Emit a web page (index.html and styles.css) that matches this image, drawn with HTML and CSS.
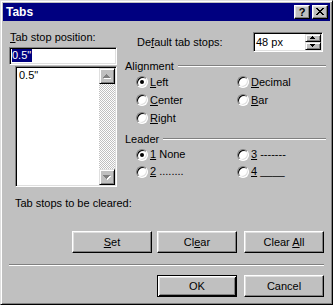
FILE: index.html
```html
<!DOCTYPE html>
<html>
<head>
<meta charset="utf-8">
<title>Tabs</title>
<link rel="stylesheet" href="styles.css">
</head>
<body>
<div class="window">
  <div class="titlebar">
    <span class="title">Tabs</span>
    <div class="caption-btns">
      <span class="cap-btn help">?</span>
      <span class="cap-btn close"><svg width="14" height="12" viewBox="0 0 14 12"><path fill="#000" d="M3 2h2v1h-2z M9 2h2v1h-2z M4 3h2v1h-2z M8 3h2v1h-2z M5 4h4v1h-4z M6 5h2v1h-2z M5 6h4v1h-4z M4 7h2v1h-2z M8 7h2v1h-2z M3 8h2v1h-2z M9 8h2v1h-2z"/></svg></span>
    </div>
  </div>
  <div class="content">
    <div class="top">
      <div class="col-left">
        <div class="pos-label"><u>T</u>ab stop position:</div>
        <div class="edit pos-edit"><span class="sel">0.5"</span></div>
        <div class="listbox">
          <div class="list-items"><div class="item">0.5"</div></div>
          <div class="vscroll">
            <div class="sb-btn"><svg width="14" height="14" viewBox="0 0 14 14"><path fill="#fff" d="M7 6h1v1h-1z M6 7h3v1h-3z M5 8h5v1h-5z M4 9h7v1h-7z"/><path fill="#808080" d="M6 5h1v1h-1z M5 6h3v1h-3z M4 7h5v1h-5z M3 8h7v1h-7z"/></svg></div>
            <div class="sb-track"></div>
            <div class="sb-btn"><svg width="14" height="14" viewBox="0 0 14 14"><path fill="#fff" d="M4 6h7v1h-7z M5 7h5v1h-5z M6 8h3v1h-3z M7 9h1v1h-1z"/><path fill="#808080" d="M3 5h7v1h-7z M4 6h5v1h-5z M5 7h3v1h-3z M6 8h1v1h-1z"/></svg></div>
          </div>
        </div>
      </div>
      <div class="col-right">
        <div class="default-row">
          <div class="default-label">De<u>f</u>ault tab stops:</div>
          <div class="edit spin">
            <span class="spin-val">48 px</span>
            <div class="spin-btns">
              <div class="spin-btn"><svg width="14" height="6" viewBox="0 0 14 6"><path fill="#000" d="M6 1h1v1h-1z M5 2h3v1h-3z M4 3h5v1h-5z"/></svg></div>
              <div class="spin-btn"><svg width="14" height="6" viewBox="0 0 14 6"><path fill="#000" d="M4 1h5v1h-5z M5 2h3v1h-3z M6 3h1v1h-1z"/></svg></div>
            </div>
          </div>
        </div>

        <div class="group-head"><span>Alignment</span><span class="etch"></span></div>
        <div class="radios align-radios">
          <div class="radio"><span class="rb checked"></span><span><u>L</u>eft</span></div>
          <div class="radio"><span class="rb"></span><span><u>D</u>ecimal</span></div>
          <div class="radio"><span class="rb"></span><span><u>C</u>enter</span></div>
          <div class="radio"><span class="rb"></span><span><u>B</u>ar</span></div>
          <div class="radio"><span class="rb"></span><span><u>R</u>ight</span></div>
        </div>

        <div class="group-head leader-head"><span>Leader</span><span class="etch"></span></div>
        <div class="radios leader-radios">
          <div class="radio"><span class="rb checked"></span><span><u>1</u> None</span></div>
          <div class="radio"><span class="rb"></span><span><u>3</u> -------</span></div>
          <div class="radio"><span class="rb"></span><span><u>2</u> ........</span></div>
          <div class="radio"><span class="rb"></span><span><u>4</u> ____</span></div>
        </div>
      </div>
    </div>

    <div class="cleared">Tab stops to be cleared:</div>

    <div class="btn-row">
      <button class="btn"><u>S</u>et</button>
      <button class="btn gap5">Cl<u>e</u>ar</button>
      <button class="btn gap7">Clear <u>A</u>ll</button>
    </div>

    <div class="separator"></div>

    <div class="btn-row ok-row">
      <button class="btn default">OK</button>
      <button class="btn gap7">Cancel</button>
    </div>
  </div>
</div>
</body>
</html>
```

FILE: styles.css
```css
* { box-sizing: border-box; }

html, body {
  margin: 0;
  padding: 0;
}

body {
  width: 333px;
  height: 305px;
  overflow: hidden;
  background: #c0c0c0;
  font-family: "Liberation Sans", Arial, sans-serif;
  font-size: 11px;
  line-height: 13px;
  color: #000;
}

u { text-decoration: underline; text-underline-offset: 1px; }

.window {
  width: 333px;
  height: 305px;
  background: #c0c0c0;
  border: 1px solid;
  border-color: #dfdfdf #000 #000 #dfdfdf;
  box-shadow: inset 1px 1px #fff, inset -1px -1px #808080;
  padding: 2px;
  display: flex;
  flex-direction: column;
}

.titlebar {
  height: 18px;
  flex-shrink: 0;
  background: #000080;
  color: #fff;
  display: flex;
  align-items: center;
  padding-left: 3px;
}

.title {
  flex: 1;
  font-weight: bold;
  font-size: 12px;
  line-height: 18px;
}

.caption-btns {
  display: flex;
  gap: 2px;
  margin-right: 2px;
}

.cap-btn {
  width: 16px;
  height: 14px;
  background: #c0c0c0;
  border: 1px solid;
  border-color: #fff #000 #000 #fff;
  box-shadow: inset -1px -1px #808080, inset 1px 1px #dfdfdf;
  display: flex;
  align-items: center;
  justify-content: center;
  color: #000;
  font-weight: bold;
  font-size: 11px;
  line-height: 12px;
}

.cap-btn svg { display: block; }

.content {
  flex: 1;
  padding: 0 3px 0 6px;
  display: flex;
  flex-direction: column;
}

.top {
  display: grid;
  grid-template-columns: 108px 202px;
  column-gap: 8px;
}

/* left column */
.pos-label {
  margin-top: 10px;
  padding-left: 1px;
  white-space: nowrap;
}

.edit {
  background: #fff;
  border: 1px solid;
  border-color: #808080 #fff #fff #808080;
  box-shadow: inset 1px 1px #000, inset -1px -1px #dfdfdf;
}

.pos-edit {
  margin-top: 3px;
  width: 108px;
  height: 18px;
  padding: 1px 2px;
}

.sel {
  display: inline-block;
  background: #000080;
  color: #fff;
  padding-right: 1px;
}

.listbox {
  margin-top: 1px;
  margin-left: 6px;
  width: 102px;
  height: 121px;
  padding: 1px;
  display: flex;
  background: #fff;
  border: 1px solid;
  border-color: #808080 #fff #fff #808080;
  box-shadow: inset 1px 1px #000, inset -1px -1px #dfdfdf;
}

.list-items {
  flex: 1;
  padding: 1px 2px;
}

.vscroll {
  width: 16px;
  display: flex;
  flex-direction: column;
}

.sb-btn {
  width: 16px;
  height: 16px;
  flex-shrink: 0;
  background: #c0c0c0;
  border: 1px solid;
  border-color: #dfdfdf #000 #000 #dfdfdf;
  box-shadow: inset 1px 1px #fff, inset -1px -1px #808080;
}

.sb-btn svg { display: block; }

.sb-track {
  flex: 1;
  background-color: #fff;
  background-image: conic-gradient(#c0c0c0 25%, #fff 0 50%, #c0c0c0 0 75%, #fff 0);
  background-size: 2px 2px;
}

/* right column */
.default-row {
  margin-top: 11px;
  height: 20px;
  display: flex;
  align-items: center;
}

.default-label {
  flex: 1;
  padding-left: 12px;
  white-space: nowrap;
}

.spin {
  width: 70px;
  height: 20px;
  margin-right: 4px;
  padding: 1px;
  display: flex;
  align-items: stretch;
}

.spin-val {
  flex: 1;
  padding-left: 1px;
  align-self: center;
}

.spin-btns {
  width: 16px;
  display: flex;
  flex-direction: column;
}

.spin-btn {
  flex: 1;
  background: #c0c0c0;
  border: 1px solid;
  border-color: #dfdfdf #000 #000 #dfdfdf;
  box-shadow: inset 1px 1px #fff, inset -1px -1px #808080;
}

.spin-btn svg { display: block; }

.group-head {
  margin-top: 8px;
  display: flex;
  height: 13px;
}

.leader-head { margin-top: 6px; }

.etch {
  flex: 1;
  align-self: flex-start;
  height: 2px;
  margin: 5px 1px 0 4px;
  border-top: 1px solid #808080;
  border-bottom: 1px solid #fff;
}

.radios {
  display: grid;
  grid-template-columns: 101px auto;
  margin-left: 11px;
}

.align-radios {
  grid-auto-rows: 18px;
}

.leader-radios {
  grid-auto-rows: 17px;
}

.radio {
  display: flex;
  align-items: center;
  gap: 2px;
  white-space: nowrap;
}

.rb {
  position: relative;
  flex-shrink: 0;
  width: 12px;
  height: 12px;
  border-radius: 50%;
  background: #fff;
  border: 1px solid;
  border-color: #808080 #fff #fff #808080;
  box-shadow: inset 1px 1px #000, inset -1px -1px #dfdfdf;
}

.rb.checked::after {
  content: "";
  position: absolute;
  left: 3px;
  top: 3px;
  width: 4px;
  height: 4px;
  border-radius: 50%;
  background: #000;
}

.cleared {
  margin-top: 10px;
  padding-left: 6px;
}

.btn-row {
  margin-top: 21px;
  display: flex;
  justify-content: flex-end;
  padding-right: 3px;
}

.ok-row { margin-top: 9px; }

.btn {
  width: 80px;
  height: 22px;
  padding: 0;
  margin: 0;
  font: inherit;
  color: #000;
  background: #c0c0c0;
  border: 1px solid;
  border-color: #fff #000 #000 #fff;
  box-shadow: inset -1px -1px #808080, inset 1px 1px #dfdfdf;
}

.btn.default {
  border-color: #000;
  box-shadow: inset 1px 1px #fff, inset -1px -1px #000, inset 2px 2px #dfdfdf, inset -2px -2px #808080;
}

.gap5 { margin-left: 5px; }
.gap7 { margin-left: 7px; }

.separator {
  margin-top: 11px;
  margin-right: 3px;
  height: 2px;
  border-top: 1px solid #808080;
  border-bottom: 1px solid #fff;
}
```
